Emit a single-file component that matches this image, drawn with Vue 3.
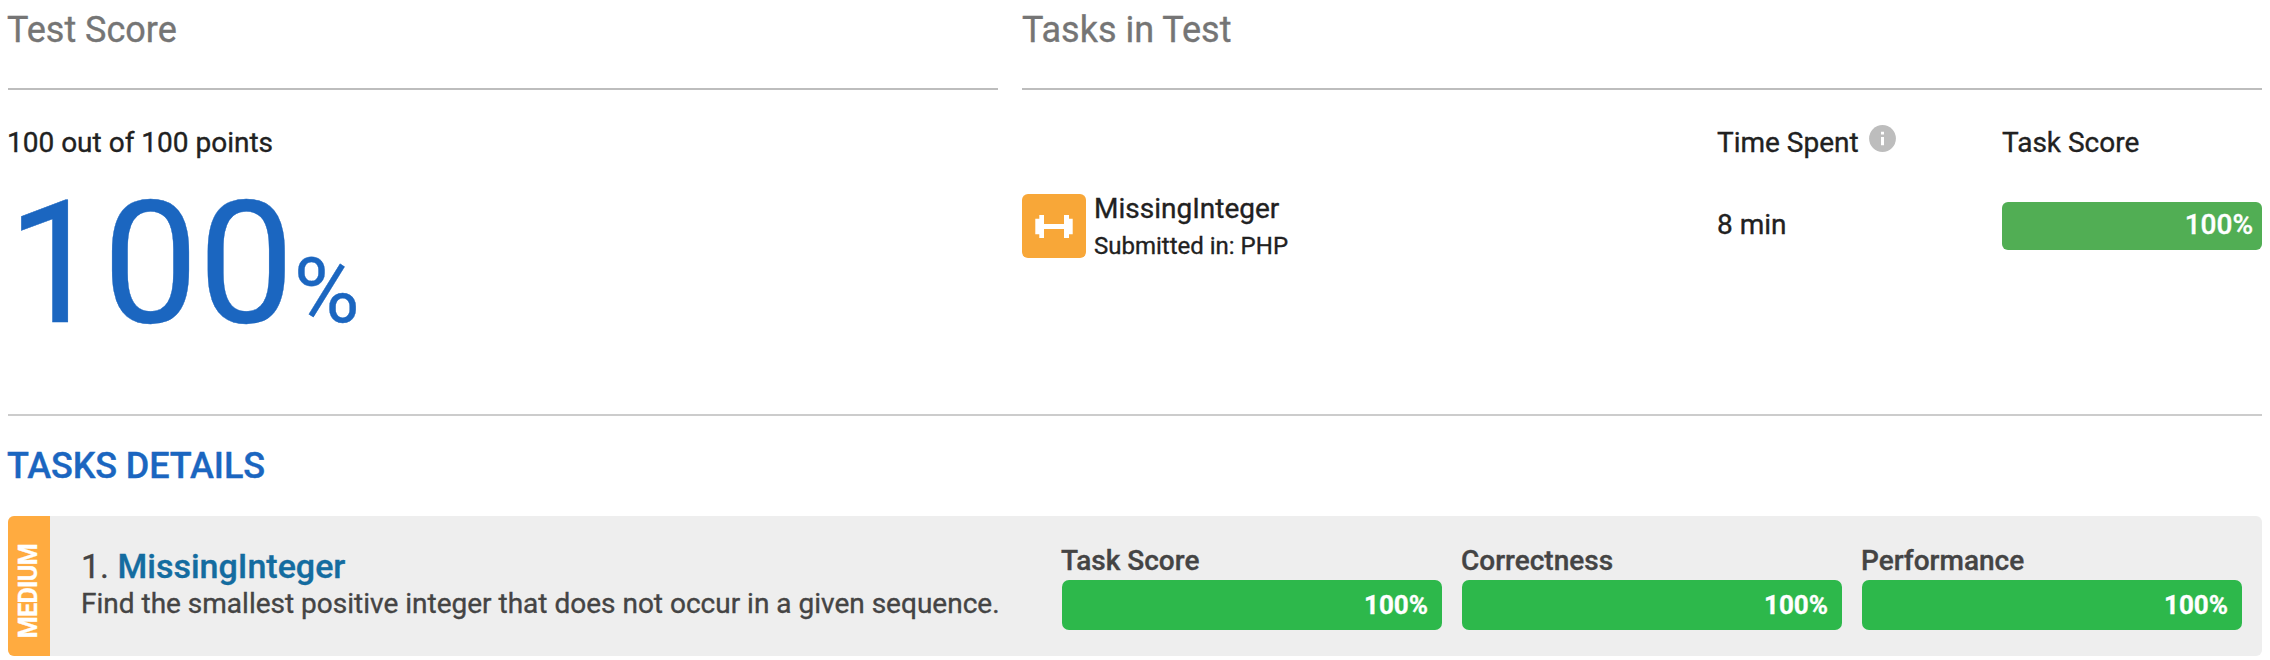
<script setup>
const bars = ['Task Score', 'Correctness', 'Performance']
</script>

<template>
  <main class="report">
    <div class="top">
      <section class="score">
        <h2>Test Score</h2>
        <p class="points">100 out of 100 points</p>
        <div class="total">100<span>%</span></div>
      </section>
      <section class="tasks">
        <h2>Tasks in Test</h2>
        <div class="row head">
          <div></div>
          <div class="time">Time Spent
            <svg class="info" viewBox="0 0 27 27"><circle cx="13.5" cy="13.5" r="13.4" fill="#bdbdbd"/><path d="M12 6.7h3v2.9h-3zM12 12h3v8.2h-3z" fill="#fff"/></svg>
          </div>
          <div>Task Score</div>
        </div>
        <div class="row item">
          <div class="task">
            <div class="icon"><svg viewBox="0 0 64 64"><path d="M13.3 24.7h4V21H22v9h20v-9h5v3.7h3.7v15.6H47V44h-5v-9H22v9h-4.7v-3.7h-4z" fill="#fff"/></svg></div>
            <div><div class="name">MissingInteger</div><div class="lang">Submitted in: PHP</div></div>
          </div>
          <div class="minutes">8 min</div>
          <div class="bar">100%</div>
        </div>
      </section>
    </div>
    <h3>TASKS DETAILS</h3>
    <section class="detail">
      <div class="level"><span>MEDIUM</span></div>
      <div class="desc"><div class="title">1. <b>MissingInteger</b></div><p>Find the smallest positive integer that does not occur in a given sequence.</p></div>
      <div v-for="b in bars" :key="b" class="metric"><div class="label">{{ b }}</div><div class="fill">100%</div></div>
    </section>
  </main>
</template>

<style>
body { background: #fff; }
</style>
<style scoped>
* { box-sizing: border-box; }
h2, h3, p { margin: 0; }
.report { width: 2270px; height: 660px; padding: 0 8px; font-family: Roboto, sans-serif; font-size: 28px; line-height: 36px; color: #212121; overflow: hidden; -webkit-text-stroke: .35px currentColor; }
.top { display: grid; grid-template-columns: 990px 1240px; column-gap: 24px; height: 416px; border-bottom: 2px solid #ccc; }
h2 { height: 90px; padding-top: 10px; border-bottom: 2px solid #bdbdbd; font-size: 36px; line-height: 40px; font-weight: 400; color: #757575; text-indent: -1px; }
.tasks h2 { text-indent: 0; }
.points { padding-top: 35px; text-indent: -1px; }
.total { padding-top: 13px; font-size: 171px; line-height: 180px; letter-spacing: -.5px; text-indent: -1px; color: #1b66c0; white-space: nowrap; }
.total span { font-size: 90px; }
.row { display: grid; grid-template-columns: 695px 285px 260px; }
.head { padding-top: 35px; }
.time { display: flex; gap: 10px; }
.info { width: 27px; height: 27px; }
.item { align-items: start; height: 64px; margin-top: 33px; }
.task { display: flex; gap: 8px; }
.icon { width: 64px; height: 64px; border-radius: 6px; background: #f8a738; }
.icon svg { display: block; }
.name { line-height: 30px; }
.lang { font-size: 24px; line-height: 44px; }
.minutes { padding-top: 13px; }
.bar { height: 48px; margin-top: 8px; border-radius: 6px; background: #51ae54; color: #fff; font-weight: 500; text-align: right; padding: 5px 9px; }
h3 { height: 100px; padding-top: 30px; font-size: 36px; line-height: 40px; font-weight: 500; letter-spacing: -.1px; text-indent: -1px; color: #1b66c0; }
.detail { display: flex; height: 140px; background: #eee; border-radius: 6px; overflow: hidden; }
.level { width: 42px; background: #ffab40; color: #fff; display: flex; align-items: center; justify-content: center; }
.level span { writing-mode: vertical-rl; transform: translateY(5px) rotate(180deg); font-size: 25px; font-weight: 700; letter-spacing: -.6px; }
.desc { width: 1012px; padding: 32px 0 0 31px; color: #444; }
.desc p { padding-top: 2px; }
.title { font-size: 34px; }
.title b { font-weight: 500; color: #146ca0; }
.metric { width: 380px; margin-right: 20px; padding-top: 26px; }
.label { font-weight: 500; line-height: 37px; padding-bottom: 1px; text-indent: -1px; color: #444; }
.fill { height: 50px; border-radius: 7px; background: #2db84b; color: #fff; font-size: 26px; font-weight: 700; text-align: right; padding: 7px 14px; }
</style>
